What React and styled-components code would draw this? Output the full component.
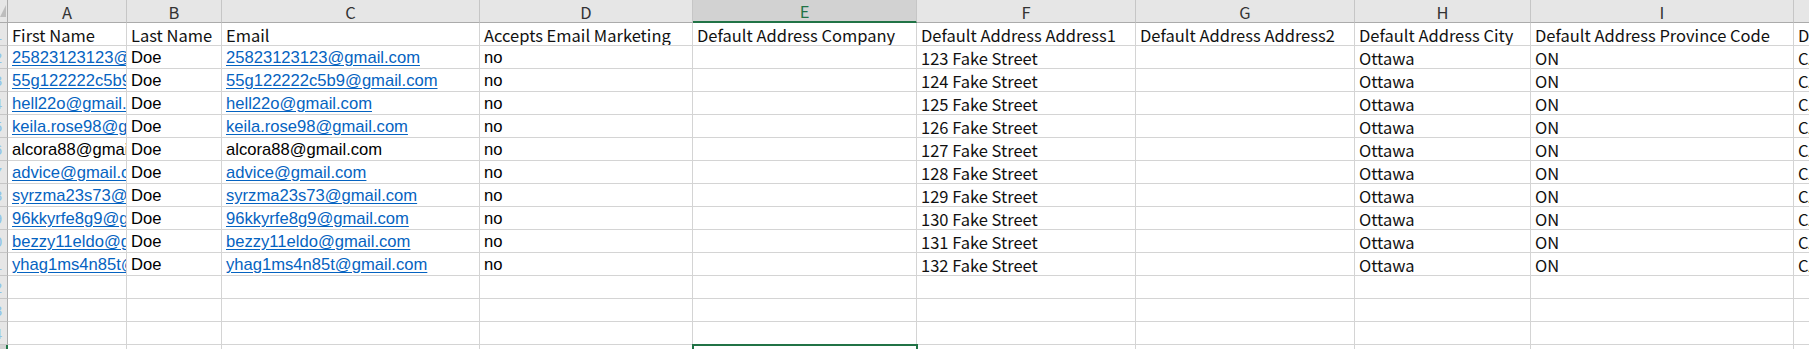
import React from "react";
import styled, { createGlobalStyle } from "styled-components";

const GlobalStyle = createGlobalStyle`
  html, body {
    margin: 0;
    padding: 0;
    background: #ffffff;
    overflow: hidden;
  }
`;

const THIN = `"Noto Sans CJK SC", "Noto Sans", sans-serif`;
const ARIAL = `"Liberation Sans", Arial, sans-serif`;

const COLUMNS = [
  { letter: "A", width: 119 },
  { letter: "B", width: 95 },
  { letter: "C", width: 258 },
  { letter: "D", width: 213 },
  { letter: "E", width: 224 },
  { letter: "F", width: 219 },
  { letter: "G", width: 219 },
  { letter: "H", width: 176 },
  { letter: "I", width: 263 },
  { letter: "J", width: 230 },
];

const HEADERS = [
  "First Name",
  "Last Name",
  "Email",
  "Accepts Email Marketing",
  "Default Address Company",
  "Default Address Address1",
  "Default Address Address2",
  "Default Address City",
  "Default Address Province Code",
  "Default Address Country Code",
];

const EMAILS = [
  ["25823123123@gmail.com", true],
  ["55g122222c5b9@gmail.com", true],
  ["hell22o@gmail.com", true],
  ["keila.rose98@gmail.com", true],
  ["alcora88@gmail.com", false],
  ["advice@gmail.com", true],
  ["syrzma23s73@gmail.com", true],
  ["96kkyrfe8g9@gmail.com", true],
  ["bezzy11eldo@gmail.com", true],
  ["yhag1ms4n85t@gmail.com", true],
];

const EMPTY_ROWS = 4;
const ACTIVE_COL = "E";
const ACTIVE_ROW = 15;

const Sheet = styled.div`
  display: grid;
  grid-template-columns: 8px ${COLUMNS.map((c) => `${c.width}px`).join(" ")};
  grid-template-rows: 23px;
  grid-auto-rows: 23px;
  width: max-content;
  background: #ffffff;
`;

const Corner = styled.div`
  box-sizing: border-box;
  background: #e6e6e6;
  border-right: 1px solid #ababab;
  border-bottom: 1px solid #ababab;
  overflow: hidden;
  svg {
    display: block;
  }
`;

const ColHead = styled.div`
  box-sizing: border-box;
  display: flex;
  align-items: center;
  justify-content: center;
  background: ${(p) => (p.$active ? "#d2d2d2" : "#e6e6e6")};
  color: ${(p) => (p.$active ? "#217346" : "#333333")};
  border-right: 1px solid #c6c6c6;
  border-bottom: ${(p) => (p.$active ? "2px solid #217346" : "1px solid #ababab")};
  font-family: ${THIN};
  font-size: 16.5px;
  line-height: 22px;
  padding-top: 1px;
`;

const RowHead = styled.div`
  box-sizing: border-box;
  background: ${(p) => (p.$active ? "#d2d2d2" : "#e6e6e6")};
  border-right: ${(p) => (p.$active ? "2px solid #217346" : "1px solid #ababab")};
  border-bottom: 1px solid #c6c6c6;
  overflow: hidden;
  display: flex;
  justify-content: flex-end;
  align-items: center;
  color: #8cc2ea;
  font-family: ${ARIAL};
  font-size: 15px;
  span {
    margin-right: 5px;
  }
`;

const Cell = styled.div`
  box-sizing: border-box;
  display: flex;
  align-items: flex-end;
  padding: 0 4px 0 4px;
  border-right: 1px solid #d4d4d4;
  border-bottom: 1px solid #d4d4d4;
  overflow: hidden;
  white-space: nowrap;
  font-family: ${(p) => (p.$thin ? THIN : ARIAL)};
  font-size: ${(p) => (p.$thin ? "16.5px" : "16.6px")};
  line-height: 20px;
  color: ${(p) => (p.$thin ? "#111111" : "#000000")};
  outline: ${(p) => (p.$selected ? "2px solid #217346" : "none")};
  outline-offset: -1px;
`;

const Link = styled.span`
  color: #0563c1;
  text-decoration: underline;
  text-underline-offset: 2px;
`;

function HeaderRow() {
  return (
    <>
      <Corner>
        <svg width="8" height="22" viewBox="0 0 8 22">
          <polygon points="6,5 6,17 0,17" fill="#bdbdbd" />
        </svg>
      </Corner>
      {COLUMNS.map((c) => (
        <ColHead key={c.letter} $active={c.letter === ACTIVE_COL}>
          {c.letter}
        </ColHead>
      ))}
    </>
  );
}

function DataRow({ index, email, isLink }) {
  const n = 123 + index;
  const mail = isLink ? <Link>{email}</Link> : email;
  return (
    <>
      <RowHead>
        <span>{index + 2}</span>
      </RowHead>
      <Cell>{mail}</Cell>
      <Cell>Doe</Cell>
      <Cell>{mail}</Cell>
      <Cell>no</Cell>
      <Cell />
      <Cell $thin>{n} Fake Street</Cell>
      <Cell />
      <Cell $thin>Ottawa</Cell>
      <Cell $thin>ON</Cell>
      <Cell $thin>CA</Cell>
    </>
  );
}

export default function App() {
  const emptyRows = Array.from({ length: EMPTY_ROWS }, (_, i) => EMAILS.length + 2 + i);
  return (
    <>
      <GlobalStyle />
      <Sheet>
        <HeaderRow />
        <RowHead>
          <span>1</span>
        </RowHead>
        {HEADERS.map((h) => (
          <Cell key={h} $thin>
            {h}
          </Cell>
        ))}
        {EMAILS.map(([email, isLink], i) => (
          <DataRow key={email} index={i} email={email} isLink={isLink} />
        ))}
        {emptyRows.map((r) => (
          <React.Fragment key={r}>
            <RowHead $active={r === ACTIVE_ROW}>
              <span>{r}</span>
            </RowHead>
            {COLUMNS.map((c) => (
              <Cell key={c.letter} $selected={r === ACTIVE_ROW && c.letter === ACTIVE_COL} />
            ))}
          </React.Fragment>
        ))}
      </Sheet>
    </>
  );
}
